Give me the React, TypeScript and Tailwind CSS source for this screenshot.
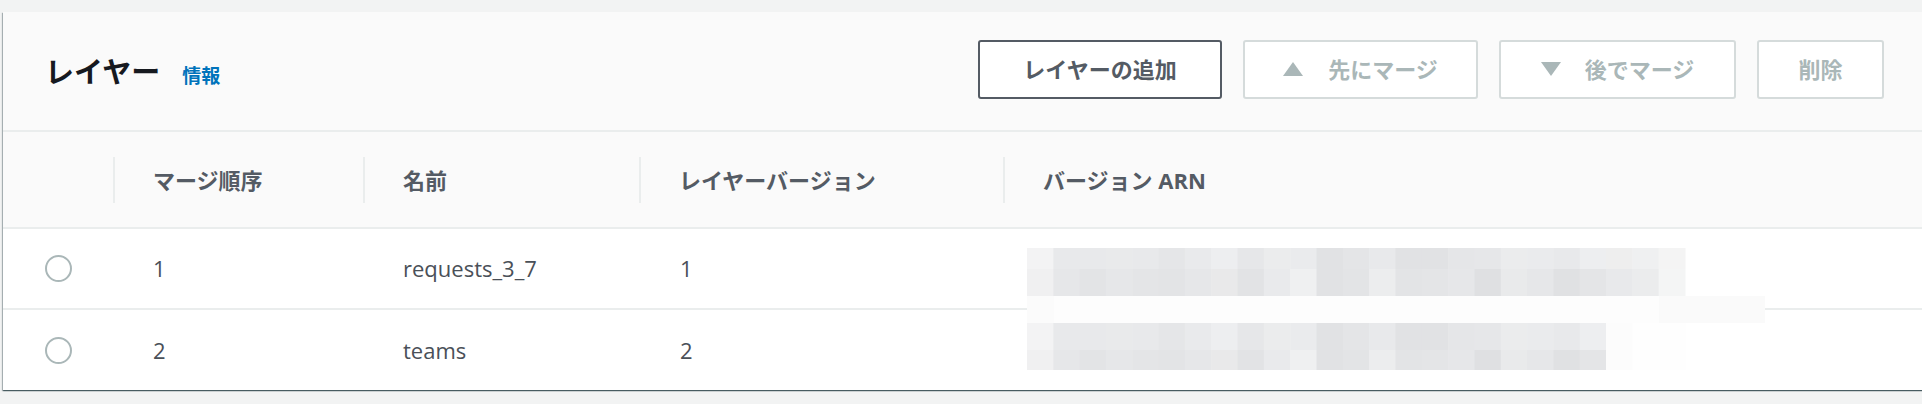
import React from "react";

const FONT = { fontFamily: '"Open Sans", "Noto Sans CJK JP", sans-serif' };

const TOP = ["#f3f3f4","#e8e9eb","#e8e9eb","#e9eaeb","#e8e9eb","#e5e6e8","#e9eaec","#edeef0","#e6e7e9","#ebeced","#eaebed","#e1e2e4","#e4e5e7","#e8e9eb","#e1e2e4","#e1e2e4","#e5e6e8","#e6e7e9","#ebeced","#eaebed","#e8e9eb","#edeef0","#eeeeee","#eff0f1","#f4f4f4"];
const BOT = ["#f0f0f1","#e6e7e9","#e3e4e6","#e6e7e9","#e4e5e7","#e3e4e6","#e6e7e9","#e9e9ea","#e2e3e5","#e9eaec","#eff0f1","#e1e2e4","#e3e4e6","#ecedee","#e3e4e6","#e4e5e7","#e6e7e9","#dfe0e2","#e9eaeb","#e6e7e9","#e0e1e3","#e4e5e7","#e8e9eb","#ebeced","#f4f5f5"];

function Mosaic() {
  const cw = 26.32;
  const row2Top = TOP.slice(0, 22).concat(["#fcfcfc", "#fefefe", "#fefefe"]);
  const row2Bot = BOT.slice(0, 22).concat(["#fcfcfc", "#fefefe", "#fefefe"]);
  return (
    <svg width="738" height="122" viewBox="0 0 738 122" className="absolute left-[1024px] top-[19px]">
      <rect x="0" y="48" width="738" height="27" fill="#fdfdfd" />
      <rect x="0" y="48" width="27" height="27" fill="#fbfbfb" />
      <rect x="632" y="48" width="106" height="27" fill="#fafafa" />
      {TOP.map((c, i) => (
        <rect key={"a" + i} x={i * cw} y="0" width={cw + 0.5} height="21" fill={c} />
      ))}
      {BOT.map((c, i) => (
        <rect key={"b" + i} x={i * cw} y="21" width={cw + 0.5} height="27" fill={c} />
      ))}
      {row2Top.map((c, i) => (
        <rect key={"c" + i} x={i * cw} y="75" width={cw + 0.5} height="27" fill={c} />
      ))}
      {row2Bot.map((c, i) => (
        <rect key={"d" + i} x={i * cw} y="102" width={cw + 0.5} height="20" fill={c} />
      ))}
    </svg>
  );
}

function UpTri() {
  return (
    <svg width="20" height="14" viewBox="0 0 20 14">
      <polygon points="10,0 20,14 0,14" fill="#aab7b8" />
    </svg>
  );
}
function DownTri() {
  return (
    <svg width="20" height="14" viewBox="0 0 20 14">
      <polygon points="0,0 20,0 10,14" fill="#aab7b8" />
    </svg>
  );
}

function Radio() {
  return <div className="w-[27px] h-[27px] rounded-full border-2 border-[#aab7b8] bg-white" />;
}

function HeadCell({ label }: { label: string }) {
  return (
    <div className="flex items-center">
      <div className="w-[2px] h-[46px] bg-[#eaeded]" />
      <span className="ml-[38px] text-[22px] font-bold text-[#545b64] leading-none">{label}</span>
    </div>
  );
}

function BodyRow({ order, name, ver, last }: { order: string; name: string; ver: string; last?: boolean }) {
  return (
    <div
      className={
        "grid grid-cols-[110px_250px_276px_364px_1fr] bg-white " +
        (last ? "h-[80px]" : "h-[81px] border-b-2 border-[#eaeded]")
      }
    >
      <div className="flex items-center justify-center">
        <Radio />
      </div>
      <div className="flex items-center pl-[40px] text-[22px] text-[#4a5058]">{order}</div>
      <div className="flex items-center pl-[40px] text-[22px] text-[#4a5058]">{name}</div>
      <div className="flex items-center pl-[41px] text-[22px] text-[#4a5058]">{ver}</div>
      <div />
    </div>
  );
}

export default function App() {
  return (
    <div className="w-[1922px] h-[404px] bg-[#f2f3f3] pt-[12px] overflow-hidden" style={FONT}>
      <div className="ml-[3px] w-[1925px] bg-white shadow-[0_1px_1px_0_rgba(0,28,36,0.5),1px_1px_1px_0_rgba(0,28,36,0.2),-1px_1px_1px_0_rgba(0,28,36,0.25)]">
        <div className="h-[120px] bg-[#fafafa] border-b-2 border-[#eaeded] flex items-center justify-between pl-[42px] pr-[44px]">
          <div className="flex items-baseline">
            <span className="text-[29px] font-bold text-[#16191f]" style={{ fontFamily: '"Noto Sans CJK JP", sans-serif' }}>
              レイヤー
            </span>
            <span className="ml-[22px] text-[19px] font-bold text-[#0073bb]" style={{ fontFamily: '"Noto Sans CJK JP", sans-serif' }}>
              情報
            </span>
          </div>
          <div className="flex items-center gap-[21px] mb-[4px]">
            <button className="w-[244px] h-[59px] rounded-[3px] border-2 border-[#545b64] bg-white flex items-center justify-center text-[22px] font-bold text-[#545b64]">
              レイヤーの追加
            </button>
            <button className="w-[235px] h-[59px] rounded-[3px] border-2 border-[#d5dbdb] bg-white flex items-center justify-center gap-[25px] text-[22px] font-bold text-[#aab7b8]">
              <UpTri />
              <span>先にマージ</span>
            </button>
            <button className="w-[237px] h-[59px] rounded-[3px] border-2 border-[#d5dbdb] bg-white flex items-center justify-center gap-[24px] text-[22px] font-bold text-[#aab7b8]">
              <DownTri />
              <span>後でマージ</span>
            </button>
            <button className="w-[127px] h-[59px] rounded-[3px] border-2 border-[#d5dbdb] bg-white flex items-center justify-center text-[22px] font-bold text-[#aab7b8]">
              削除
            </button>
          </div>
        </div>
        <div className="h-[97px] bg-[#fafafa] border-b-2 border-[#eaeded] grid grid-cols-[110px_250px_276px_364px_1fr]">
          <div />
          <HeadCell label="マージ順序" />
          <HeadCell label="名前" />
          <HeadCell label="レイヤーバージョン" />
          <HeadCell label="バージョン ARN" />
        </div>
        <div className="relative">
          <BodyRow order="1" name="requests_3_7" ver="1" />
          <BodyRow order="2" name="teams" ver="2" last />
          <Mosaic />
        </div>
      </div>
    </div>
  );
}
